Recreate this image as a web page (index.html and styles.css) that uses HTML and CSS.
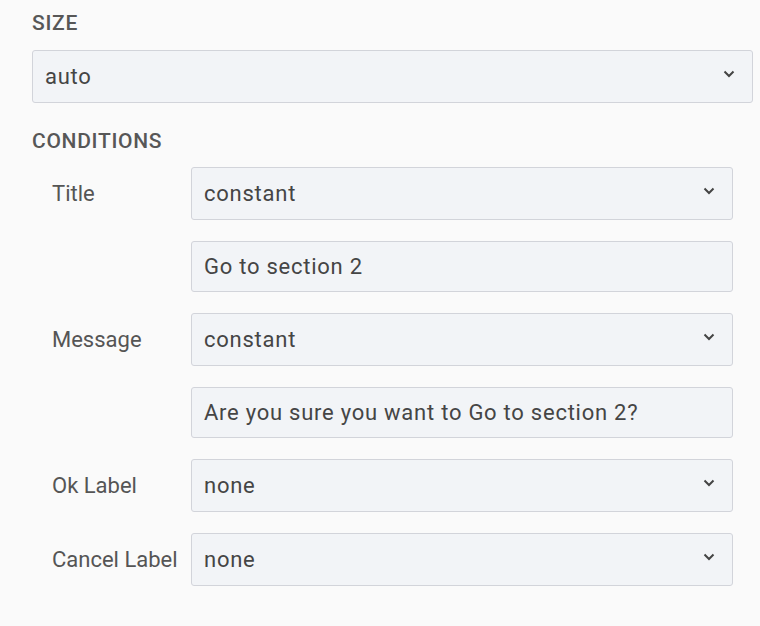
FILE: index.html
```html
<!DOCTYPE html>
<html>
<head>
<meta charset="utf-8">
<link rel="stylesheet" href="styles.css">
</head>
<body>
<div class="panel">
  <h2 class="section-title">SIZE</h2>
  <div class="field select size-select">
    <span class="value">auto</span>
    <svg class="chevron" width="12" height="8" viewBox="0 0 12 8"><path d="M1.5 1.5 L6 6 L10.5 1.5" fill="none" stroke="#444" stroke-width="2"/></svg>
  </div>
  <h2 class="section-title conditions-title">CONDITIONS</h2>
  <div class="conditions">
    <div class="row">
      <div class="label">Title</div>
      <div class="fields">
        <div class="field select">
          <span class="value">constant</span>
          <svg class="chevron" width="12" height="8" viewBox="0 0 12 8"><path d="M1.5 1.5 L6 6 L10.5 1.5" fill="none" stroke="#444" stroke-width="2"/></svg>
        </div>
        <div class="field input"><span class="value">Go to section 2</span></div>
      </div>
    </div>
    <div class="row">
      <div class="label">Message</div>
      <div class="fields">
        <div class="field select">
          <span class="value">constant</span>
          <svg class="chevron" width="12" height="8" viewBox="0 0 12 8"><path d="M1.5 1.5 L6 6 L10.5 1.5" fill="none" stroke="#444" stroke-width="2"/></svg>
        </div>
        <div class="field input"><span class="value">Are you sure you want to Go to section 2?</span></div>
      </div>
    </div>
    <div class="row">
      <div class="label">Ok Label</div>
      <div class="fields">
        <div class="field select">
          <span class="value">none</span>
          <svg class="chevron" width="12" height="8" viewBox="0 0 12 8"><path d="M1.5 1.5 L6 6 L10.5 1.5" fill="none" stroke="#444" stroke-width="2"/></svg>
        </div>
      </div>
    </div>
    <div class="row">
      <div class="label">Cancel Label</div>
      <div class="fields">
        <div class="field select">
          <span class="value">none</span>
          <svg class="chevron" width="12" height="8" viewBox="0 0 12 8"><path d="M1.5 1.5 L6 6 L10.5 1.5" fill="none" stroke="#444" stroke-width="2"/></svg>
        </div>
      </div>
    </div>
  </div>
</div>
</body>
</html>
```
FILE: styles.css
```css
html, body {
  margin: 0;
  padding: 0;
  background: #fafafa;
}
body {
  font-family: Roboto, "Liberation Sans", sans-serif;
  color: #4a4a4a;
}
.panel {
  padding: 11px 7px 0 32px;
}
.section-title {
  margin: 0;
  font-size: 21px;
  line-height: 24px;
  font-weight: 500;
  letter-spacing: 0.7px;
  color: #575757;
}
.size-select {
  margin-top: 15px;
  height: 52px;
}
.conditions-title {
  margin-top: 26px;
}
.conditions {
  margin-top: 14px;
  padding: 0 20px;
  display: flex;
  flex-direction: column;
  gap: 21px;
}
.row {
  display: flex;
}
.label {
  width: 139px;
  flex: none;
  height: 53px;
  display: flex;
  align-items: center;
  font-size: 22px;
  color: #555;
  white-space: nowrap;
}
.fields {
  flex: 1;
  display: flex;
  flex-direction: column;
  gap: 21px;
}
.field {
  box-sizing: border-box;
  border: 1px solid #d2d4da;
  border-radius: 3px;
  background: #f2f4f7;
  display: flex;
  align-items: center;
  padding: 0 17px 0 12px;
  font-size: 22px;
  color: #454545;
}
.select {
  height: 53px;
}
.input {
  height: 51px;
}
.value {
  flex: 1;
  white-space: nowrap;
  letter-spacing: 0.75px;
}
.chevron {
  flex: none;
  margin-bottom: 6px;
}
```
